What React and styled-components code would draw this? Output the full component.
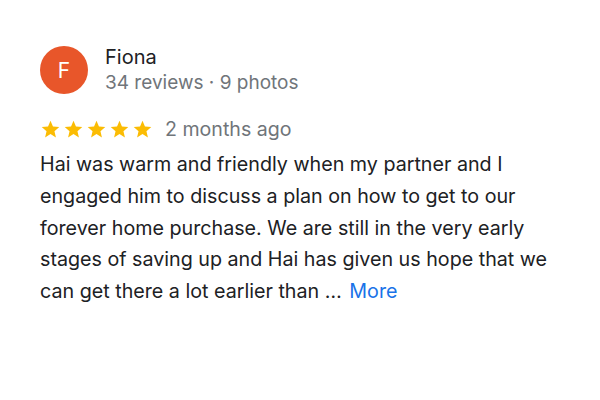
import styled, { createGlobalStyle } from 'styled-components';

const GlobalStyle = createGlobalStyle`
    body {
        margin: 0;
        background: #ffffff;
        font-family: Inter, Roboto, "Liberation Sans", Arial, sans-serif;
    }
`;

export default function App() {
    const body = "Hai was warm and friendly when my partner and I engaged him to discuss a plan on how to get to our forever home purchase. We are still in the very early stages of saving up and Hai has given us hope that we can get there a lot earlier than";
    return (
        <>
            <GlobalStyle />
            <Card>
                <Header>
                    <Avatar>F</Avatar>
                    <Author>
                        <Name>Fiona</Name>
                        <Meta>34 reviews · 9 photos</Meta>
                    </Author>
                </Header>
                <RatingRow>
                    <Stars>
                        {[0, 1, 2, 3, 4].map((i) => (
                            <Star key={i} />
                        ))}
                    </Stars>
                    <Time>2 months ago</Time>
                </RatingRow>
                <Body>
                    {body} …{' '}<More>More</More>
                </Body>
            </Card>
        </>
    );
}

function Star() {
    return (
        <svg width="21" height="21" viewBox="0 0 24 24">
            <path fill="#fbbc04" d="M12 17.27L18.18 21l-1.64-7.03L22 9.24l-7.19-.61L12 2 9.19 8.63 2 9.24l5.46 4.73L5.82 21z" />
        </svg>
    );
}

const Card = styled.div`
    width: 600px;
    height: 400px;
    box-sizing: border-box;
    padding: 46px 40px 0 40px;
    display: flex;
    flex-direction: column;
`;

const Header = styled.div`
    display: flex;
    align-items: flex-start;
    gap: 17px;
`;

const Avatar = styled.div`
    width: 48px;
    height: 48px;
    border-radius: 50%;
    background: #e8562a;
    color: #ffffff;
    display: flex;
    align-items: center;
    justify-content: center;
    font-size: 21px;
`;

const Author = styled.div`
    display: flex;
    flex-direction: column;
    margin-top: -2px;
`;

const Name = styled.div`
    font-size: 20px;
    line-height: 26px;
    color: #202124;
`;

const Meta = styled.div`
    font-size: 19px;
    line-height: 26px;
    color: #70757a;
`;

const RatingRow = styled.div`
    display: flex;
    align-items: center;
    gap: 12px;
    margin-top: 21px;
`;

const Stars = styled.div`
    display: flex;
    gap: 2px;
    svg {
        display: block;
    }
`;

const Time = styled.div`
    font-size: 19.6px;
    line-height: 24px;
    color: #70757a;
`;

const Body = styled.div`
    margin-top: 8px;
    font-size: 19.7px;
    line-height: 31.8px;
    color: #202124;
    width: 520px;
`;

const More = styled.span`
    color: #1a73e8;
    margin-left: 2px;
`;
